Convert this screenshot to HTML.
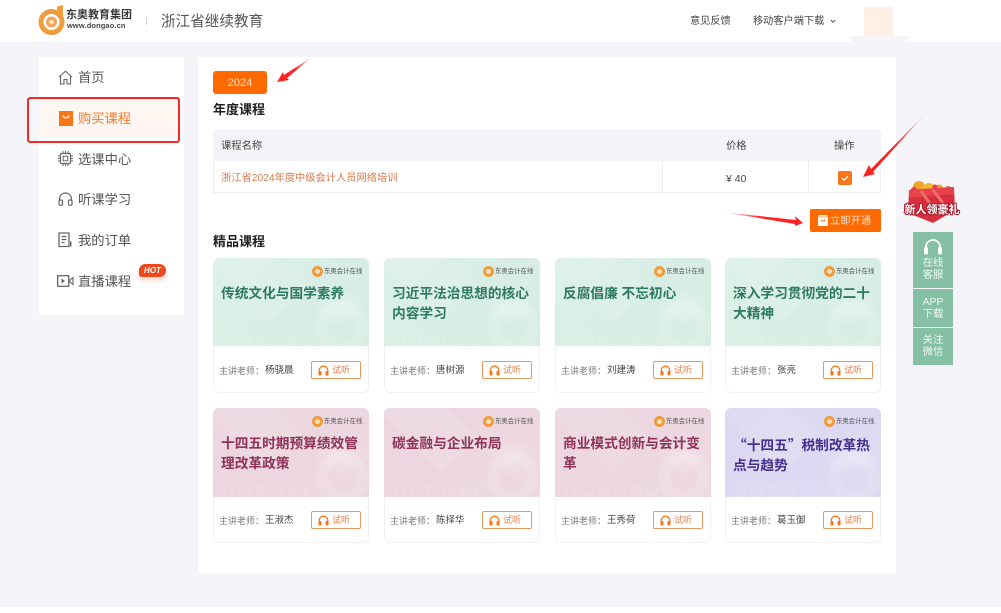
<!DOCTYPE html>
<html lang="zh"><head><meta charset="utf-8">
<style>
*,*::after{box-sizing:border-box;margin:0;padding:0}
html,body{width:1001px;height:613px;overflow:hidden;background:#fff}
body{font-family:"Liberation Sans","Noto Sans CJK SC",sans-serif;position:relative;filter:blur(.3px)}
.a{position:absolute;white-space:nowrap}
#bg{left:0;top:42px;width:1001px;height:565px;background:#f4f4f9}
.nav{left:78px;font-size:13.3px;line-height:18px;color:#555}
.ic{position:absolute;overflow:visible}
.card{position:absolute;width:156px;height:135px;background:#fff;border-radius:6px;overflow:hidden}
.card::after{content:"";position:absolute;left:0;top:0;width:156px;height:135px;border:1px solid #f1f1f3;border-top:0;border-radius:6px;pointer-events:none}
.img{position:absolute;left:0;top:0;width:156px;height:88px;overflow:hidden;z-index:1}
.g{background:linear-gradient(135deg,#dcf0e8,#d5ede2)}
.r{background:linear-gradient(135deg,#ecd6df,#edd8e0);height:89px}
.p{background:linear-gradient(135deg,#dcd8f1,#dedaf2);height:89px}
.t{position:absolute;left:8px;top:25.5px;width:146px;font-size:13.7px;line-height:20px;font-weight:700;white-space:normal}
.g .t{color:#2d7a5c}.r .t{color:#8f3359}.p .t{color:#46318f}
.q{font-family:"Noto Sans CJK SC",sans-serif}
.lg{position:absolute;left:99px;top:8px;width:52px;height:12px}
.lg i{position:absolute;left:0;top:0;width:11px;height:11px;border-radius:50%;border:3px solid #ee9c3c;background:#fbe0bd}
.lg b{position:absolute;left:12px;top:1px;font-size:6.4px;line-height:10px;font-weight:400;color:#555;white-space:nowrap}
.wm{position:absolute;left:9px;top:74px;font-size:19px;line-height:20px;font-weight:700;letter-spacing:2px;color:rgba(255,255,255,.1)}
.c1{position:absolute;left:103px;top:43px;width:52px;height:52px;border-radius:50%;border:12px solid rgba(255,255,255,.14)}
.gl{position:absolute;left:100px;top:30px;width:56px;height:40px;border-radius:50%;background:radial-gradient(closest-side,rgba(255,255,255,.28),rgba(255,255,255,0))}
.sh{position:absolute;left:18px;top:-30px;width:50px;height:90px;background:rgba(255,255,255,.1);transform:rotate(-45deg)}
.lb{position:absolute;left:6px;top:106px;font-size:9px;line-height:14px;color:#777}
.nm{position:absolute;left:52px;top:106px;font-size:9.5px;line-height:14px;color:#444}
.bt{position:absolute;left:98px;top:103px;width:50px;height:18px;border:1px solid #e69a5f;border-radius:2px;color:#e8804a;font-size:9px;line-height:16px;padding-left:20px}
.bt svg{position:absolute;left:6px;top:3px}
.sd{left:913px;width:40px;background:#85bfa4;color:#f2f8f5;font-size:10.4px;line-height:11.5px;text-align:center}
</style></head><body>
<div class="a" id="bg"></div>

<!-- Header -->
<svg class="ic" style="left:38px;top:5px" width="30" height="29" viewBox="0 0 30 29"><circle cx="13.500" cy="17" r="10.500" fill="none" stroke="#ee9c3c" stroke-width="5"/><path d="M19 10V1.500L25 0v15z" fill="#ee9c3c"/><circle cx="13.500" cy="17" r="8" fill="#fff"/><circle cx="13.500" cy="17" r="5.500" fill="#f2a65a"/><circle cx="13.500" cy="17" r="2.300" fill="#fbe3c7"/></svg>
<div class="a" style="left:66px;top:8px;font-size:11px;line-height:14px;font-weight:700;color:#3a3a3a">东奥教育集团</div>
<div class="a" style="left:67px;top:21px;font-size:7.5px;line-height:10px;font-weight:700;color:#444;letter-spacing:.1px">www.dongao.cn</div>
<div class="a" style="left:146px;top:17px;width:1px;height:8px;background:#ccc"></div>
<div class="a" style="left:161px;top:11px;font-size:14.6px;line-height:22px;color:#555">浙江省继续教育</div>
<div class="a" style="left:690px;top:14px;font-size:10.2px;line-height:15px;color:#444">意见反馈</div>
<div class="a" style="left:753px;top:14px;font-size:10.2px;line-height:15px;color:#444">移动客户端下载</div>
<svg class="ic" style="left:830px;top:19px" width="6" height="5" viewBox="0 0 6 5"><path d="M.8 1l2.200 2.200L5.200 1" fill="none" stroke="#555" stroke-width="1"/></svg>
<div class="a" style="left:864px;top:7px;width:29px;height:29px;background:#fff0e7"></div>
<div class="a" style="left:847px;top:36px;width:63px;height:6px;background:#f4f4f9;clip-path:polygon(0 0,100% 0,91% 100%,9% 100%)"></div>

<!-- Sidebar -->
<div class="a" style="left:39px;top:57px;width:145px;height:258px;background:#fff"></div>
<div class="a" style="left:39px;top:98px;width:140px;height:40px;background:#fef6f1"></div>
<div class="a" style="left:27px;top:97px;width:153px;height:46px;border:2px solid #ee2b24;border-radius:3px"></div>
<svg class="ic" style="left:58px;top:70px" width="15" height="15" viewBox="0 0 15 15"><path d="M1 7L7.500 1.200 14 7M2.500 6v8h3.500v-4.500h3V14h3.500V6" fill="none" stroke="#666" stroke-width="1.100"/></svg>
<div class="a nav" style="top:69px">首页</div>
<svg class="ic" style="left:59px;top:111px" width="14" height="15" viewBox="0 0 14 15"><rect width="14" height="15" fill="#f97518"/><path d="M4 4.500c.6 3 5.400 3 6 0" fill="none" stroke="#fff" stroke-width="1.300"/></svg>
<div class="a nav" style="top:110px;color:#f47b2d">购买课程</div>
<svg class="ic" style="left:58px;top:151px" width="15" height="15" viewBox="0 0 15 15"><rect x="2.500" y="2.500" width="10" height="10" rx="1" fill="none" stroke="#666" stroke-width="1.200"/><rect x="5.200" y="5.200" width="4.600" height="4.600" fill="none" stroke="#666"/><path d="M5 0v2.500M7.500 0v2.500M10 0v2.500M5 12.500V15M7.500 12.500V15M10 12.500V15M0 5h2.500M0 7.500h2.500M0 10h2.500M12.500 5H15M12.500 7.500H15M12.500 10H15" stroke="#666"/></svg>
<div class="a nav" style="top:151px">选课中心</div>
<svg class="ic" style="left:58px;top:192px" width="15" height="14" viewBox="0 0 15 14"><path d="M1.500 9V7a6 6 0 0 1 12 0v2" fill="none" stroke="#666" stroke-width="1.200"/><rect x="1" y="8" width="3.500" height="5.300" rx="1.200" fill="none" stroke="#666" stroke-width="1.200"/><rect x="10.500" y="8" width="3.500" height="5.300" rx="1.200" fill="none" stroke="#666" stroke-width="1.200"/></svg>
<div class="a nav" style="top:191px">听课学习</div>
<svg class="ic" style="left:58px;top:232px" width="14" height="16" viewBox="0 0 14 16"><path d="M11 14.500H1V1h10zM3.500 4.500h5M3.500 7.500h5M3.500 10.500h3" fill="none" stroke="#666" stroke-width="1.300"/><path d="M12 9.500h1.500v5H12z" fill="#666"/></svg>
<div class="a nav" style="top:232px">我的订单</div>
<svg class="ic" style="left:57px;top:275px" width="17" height="12" viewBox="0 0 17 12"><rect x=".7" y=".7" width="11" height="10.600" fill="none" stroke="#666" stroke-width="1.300"/><path d="M4.500 3.500L8 6 4.500 8.500z" fill="#666"/><path d="M16 2.500L13 5v2l3 2.500z" fill="none" stroke="#666" stroke-width="1.100"/></svg>
<div class="a nav" style="top:273px">直播课程</div>
<div class="a" style="left:139px;top:264px;width:27px;height:13px;border-radius:7px 7px 7px 3px;background:#ec4a1e;box-shadow:0 3px 5px rgba(236,74,30,.25);color:#fff;font-size:8px;line-height:13px;font-weight:700;font-style:italic;text-align:center">HOT</div>

<!-- Main panel -->
<div class="a" style="left:198px;top:57px;width:698px;height:516px;background:#fff"></div>
<div class="a" style="left:213px;top:71px;width:54px;height:23px;background:#ff6a00;border-radius:3px;color:#fde3cf;font-size:11px;line-height:24px;text-align:center">2024</div>
<div class="a" style="left:213px;top:101px;font-size:13px;line-height:18px;font-weight:700;color:#222">年度课程</div>

<!-- Table -->
<div class="a" style="left:213px;top:129px;width:668px;height:64px;border:1px solid #efeff3;border-radius:4px 4px 0 0"></div>
<div class="a" style="left:213px;top:129px;width:668px;height:32px;background:#f4f4f8;border-radius:4px 4px 0 0"></div>
<div class="a" style="left:662px;top:161px;width:1px;height:31px;background:#efeff3"></div>
<div class="a" style="left:808px;top:161px;width:1px;height:31px;background:#efeff3"></div>
<div class="a" style="left:221px;top:139px;font-size:10.3px;line-height:15px;color:#444">课程名称</div>
<div class="a" style="left:726px;top:139px;font-size:10.3px;line-height:15px;color:#444">价格</div>
<div class="a" style="left:834px;top:139px;font-size:10.3px;line-height:15px;color:#444">操作</div>
<div class="a" style="left:221px;top:171px;font-size:10.25px;line-height:16px;color:#d9784a">浙江省2024年度中级会计人员网络培训</div>
<div class="a" style="left:726px;top:171px;font-size:10.500px;line-height:16px;color:#444">¥ 40</div>
<svg class="ic" style="left:838px;top:171px" width="14" height="14" viewBox="0 0 14 14"><rect width="14" height="14" rx="2" fill="#f97518"/><path d="M4 7.200l2.200 2 3.800-4" fill="none" stroke="#fff" stroke-width="1.200"/></svg>

<!-- Open button -->
<div class="a" style="left:810px;top:209px;width:71px;height:23px;background:#ff6a00;border-radius:2px;color:#fde3cf;font-size:10.3px;line-height:26px;padding-left:20px">立即开通</div>
<svg class="ic" style="left:818px;top:215px" width="10" height="11" viewBox="0 0 10 11"><path d="M1 0h8l1 2v9H0V2z" fill="#fff"/><path d="M3 4.500c.4 2 3.600 2 4 0" fill="none" stroke="#ff6a00"/><path d="M0 2h10" stroke="#ff6a00" stroke-width=".6"/></svg>

<div class="a" style="left:213px;top:233px;font-size:13px;line-height:18px;font-weight:700;color:#222">精品课程</div>

<!-- Row 1 -->
<div class="card" style="left:213px;top:258px"><div class="img g"><div class="sh"></div><div class="gl"></div><div class="c1"></div><div class="wm">DONGAO</div><div class="lg"><i></i><b>东奥会计在线</b></div><div class="t">传统文化与国学素养</div></div><div class="lb">主讲老师：</div><div class="nm">杨骁晨</div><div class="bt"><svg width="11" height="11" viewBox="0 0 11 11"><path d="M1.200 7V5.500a4.300 4.300 0 0 1 8.600 0V7" fill="none" stroke="#f97518" stroke-width="1.300"/><rect x=".5" y="6" width="3" height="4.500" rx="1" fill="#f97518"/><rect x="7.500" y="6" width="3" height="4.500" rx="1" fill="#f97518"/></svg>试听</div></div>
<div class="card" style="left:384px;top:258px"><div class="img g"><div class="sh"></div><div class="gl"></div><div class="c1"></div><div class="wm">DONGAO</div><div class="lg"><i></i><b>东奥会计在线</b></div><div class="t">习近平法治思想的核心内容学习</div></div><div class="lb">主讲老师：</div><div class="nm">唐树源</div><div class="bt"><svg width="11" height="11" viewBox="0 0 11 11"><path d="M1.200 7V5.500a4.300 4.300 0 0 1 8.600 0V7" fill="none" stroke="#f97518" stroke-width="1.300"/><rect x=".5" y="6" width="3" height="4.500" rx="1" fill="#f97518"/><rect x="7.500" y="6" width="3" height="4.500" rx="1" fill="#f97518"/></svg>试听</div></div>
<div class="card" style="left:555px;top:258px"><div class="img g"><div class="sh"></div><div class="gl"></div><div class="c1"></div><div class="wm">DONGAO</div><div class="lg"><i></i><b>东奥会计在线</b></div><div class="t">反腐倡廉 不忘初心</div></div><div class="lb">主讲老师：</div><div class="nm">刘建涛</div><div class="bt"><svg width="11" height="11" viewBox="0 0 11 11"><path d="M1.200 7V5.500a4.300 4.300 0 0 1 8.600 0V7" fill="none" stroke="#f97518" stroke-width="1.300"/><rect x=".5" y="6" width="3" height="4.500" rx="1" fill="#f97518"/><rect x="7.500" y="6" width="3" height="4.500" rx="1" fill="#f97518"/></svg>试听</div></div>
<div class="card" style="left:725px;top:258px"><div class="img g"><div class="sh"></div><div class="gl"></div><div class="c1"></div><div class="wm">DONGAO</div><div class="lg"><i></i><b>东奥会计在线</b></div><div class="t">深入学习贯彻党的二十大精神</div></div><div class="lb">主讲老师：</div><div class="nm">张亮</div><div class="bt"><svg width="11" height="11" viewBox="0 0 11 11"><path d="M1.200 7V5.500a4.300 4.300 0 0 1 8.600 0V7" fill="none" stroke="#f97518" stroke-width="1.300"/><rect x=".5" y="6" width="3" height="4.500" rx="1" fill="#f97518"/><rect x="7.500" y="6" width="3" height="4.500" rx="1" fill="#f97518"/></svg>试听</div></div>

<!-- Row 2 -->
<div class="card" style="left:213px;top:408px"><div class="img r"><div class="sh"></div><div class="gl"></div><div class="c1"></div><div class="wm">DONGAO</div><div class="lg"><i></i><b>东奥会计在线</b></div><div class="t">十四五时期预算绩效管理改革政策</div></div><div class="lb">主讲老师：</div><div class="nm">王淑杰</div><div class="bt"><svg width="11" height="11" viewBox="0 0 11 11"><path d="M1.200 7V5.500a4.300 4.300 0 0 1 8.600 0V7" fill="none" stroke="#f97518" stroke-width="1.300"/><rect x=".5" y="6" width="3" height="4.500" rx="1" fill="#f97518"/><rect x="7.500" y="6" width="3" height="4.500" rx="1" fill="#f97518"/></svg>试听</div></div>
<div class="card" style="left:384px;top:408px"><div class="img r"><div class="sh"></div><div class="gl"></div><div class="c1"></div><div class="wm">DONGAO</div><div class="lg"><i></i><b>东奥会计在线</b></div><div class="t">碳金融与企业布局</div></div><div class="lb">主讲老师：</div><div class="nm">陈择华</div><div class="bt"><svg width="11" height="11" viewBox="0 0 11 11"><path d="M1.200 7V5.500a4.300 4.300 0 0 1 8.600 0V7" fill="none" stroke="#f97518" stroke-width="1.300"/><rect x=".5" y="6" width="3" height="4.500" rx="1" fill="#f97518"/><rect x="7.500" y="6" width="3" height="4.500" rx="1" fill="#f97518"/></svg>试听</div></div>
<div class="card" style="left:555px;top:408px"><div class="img r"><div class="sh"></div><div class="gl"></div><div class="c1"></div><div class="wm">DONGAO</div><div class="lg"><i></i><b>东奥会计在线</b></div><div class="t">商业模式创新与会计变革</div></div><div class="lb">主讲老师：</div><div class="nm">王秀荷</div><div class="bt"><svg width="11" height="11" viewBox="0 0 11 11"><path d="M1.200 7V5.500a4.300 4.300 0 0 1 8.600 0V7" fill="none" stroke="#f97518" stroke-width="1.300"/><rect x=".5" y="6" width="3" height="4.500" rx="1" fill="#f97518"/><rect x="7.500" y="6" width="3" height="4.500" rx="1" fill="#f97518"/></svg>试听</div></div>
<div class="card" style="left:725px;top:408px"><div class="img p"><div class="sh"></div><div class="gl"></div><div class="c1"></div><div class="wm">DONGAO</div><div class="lg"><i></i><b>东奥会计在线</b></div><div class="t q">“十四五”税制改革热点与趋势</div></div><div class="lb">主讲老师：</div><div class="nm">葛玉御</div><div class="bt"><svg width="11" height="11" viewBox="0 0 11 11"><path d="M1.200 7V5.500a4.300 4.300 0 0 1 8.600 0V7" fill="none" stroke="#f97518" stroke-width="1.300"/><rect x=".5" y="6" width="3" height="4.500" rx="1" fill="#f97518"/><rect x="7.500" y="6" width="3" height="4.500" rx="1" fill="#f97518"/></svg>试听</div></div>

<!-- Red arrows -->
<svg class="ic" style="left:0;top:0;z-index:2" width="1001" height="613" viewBox="0 0 1001 613">
<defs>
<linearGradient id="a1" x1="313" y1="57" x2="277" y2="81" gradientUnits="userSpaceOnUse"><stop offset="0" stop-color="#f22" stop-opacity="0"/><stop offset=".5" stop-color="#f22"/></linearGradient>
<linearGradient id="a2" x1="927" y1="112" x2="863" y2="176" gradientUnits="userSpaceOnUse"><stop offset="0" stop-color="#f22" stop-opacity="0"/><stop offset=".5" stop-color="#f22"/></linearGradient>
<linearGradient id="a3" x1="722" y1="212" x2="803" y2="223" gradientUnits="userSpaceOnUse"><stop offset="0" stop-color="#f22" stop-opacity="0"/><stop offset=".5" stop-color="#f22"/></linearGradient>
</defs>
<path d="M312 57L284 75 283 72 277 82 289 80 287 78z" fill="url(#a1)"/>
<path d="M927 112L871 169 869 165 863 177 875 174 873 172z" fill="url(#a2)"/>
<path d="M722 212L796 220 795 216 803 223 795 226 795 224z" fill="url(#a3)"/>
</svg>

<!-- Gift -->
<svg class="ic" style="left:903px;top:179px" width="58" height="46" viewBox="0 0 58 46">
<circle cx="16" cy="8" r="6" fill="#f2a52a"/><circle cx="26" cy="10" r="6" fill="#f5b52e"/><circle cx="36" cy="10" r="4.500" fill="#f0a030"/><circle cx="11" cy="11" r="3" fill="#e8385a"/><circle cx="32" cy="8" r="2.500" fill="#e8385a"/><circle cx="45" cy="10" r="3" fill="#ee6a2a"/>
<path d="M6 11L51 8 52 31 30 44 5 34z" fill="#d6303f"/><path d="M6 11L51 8 51 15 6 19z" fill="#e8434c"/>
<path d="M18 12L28 26M30 11L40 24" stroke="#ef6d6d" stroke-width="3"/>
<text x="29" y="34" text-anchor="middle" font-family="Liberation Sans,Noto Sans CJK SC,sans-serif" font-size="11" font-weight="700" fill="#fff" stroke="#a81f30" stroke-width="2" paint-order="stroke">新人领豪礼</text>
</svg>

<!-- Side tools -->
<div class="a sd" style="top:232px;height:56px;padding-top:26px">在线<br>客服</div>
<svg class="ic" style="left:923px;top:238px" width="20" height="18" viewBox="0 0 20 18"><path d="M3 11V9a7 7 0 0 1 14 0v2" fill="none" stroke="#fff" stroke-width="1.800"/><rect x="1" y="9" width="4" height="7.500" rx="1.500" fill="#fff"/><rect x="15" y="9" width="4" height="7.500" rx="1.500" fill="#fff"/></svg>
<div class="a sd" style="top:289px;height:38px;padding-top:8px">APP<br>下载</div>
<div class="a sd" style="top:328px;height:37px;padding-top:7px">关注<br>微信</div>
</body></html>
